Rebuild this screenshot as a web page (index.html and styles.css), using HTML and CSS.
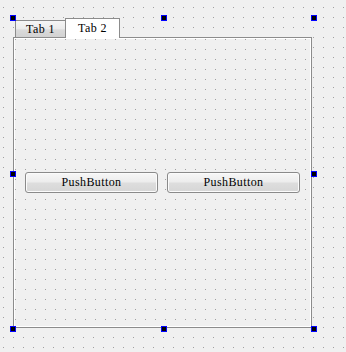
FILE: index.html
```html
<!DOCTYPE html>
<html lang="en">
<head>
    <meta charset="UTF-8">
    <title>Form</title>
    <link rel="stylesheet" href="styles.css">
</head>
<body>
    <div class="selection">
        <!-- tab widget -->
        <div class="tab-widget">
            <div class="tab-bar">
                <div class="tab">Tab 1</div>
                <div class="tab active">Tab 2</div>
            </div>
            <div class="pane">
                <button class="push">PushButton</button>
                <button class="push">PushButton</button>
            </div>
        </div>

        <!-- resize handles -->
        <span class="handle h-tl"></span>
        <span class="handle h-tm"></span>
        <span class="handle h-tr"></span>
        <span class="handle h-ml"></span>
        <span class="handle h-mr"></span>
        <span class="handle h-bl"></span>
        <span class="handle h-bm"></span>
        <span class="handle h-br"></span>
    </div>
</body>
</html>
```

FILE: styles.css
```css
body {
    margin: 0;
    width: 346px;
    height: 352px;
    overflow: hidden;
    font-family: 'Liberation Serif', serif;
    font-size: 12px;
    color: #000;
    background:
        linear-gradient(to bottom, transparent 1px, #f0f0f0 1px) 0 7px / 10px 10px,
        linear-gradient(to right, transparent 1px, #f0f0f0 1px) 3px 0 / 10px 10px,
        #a0a0a0;
}

.selection {
    position: relative;
    margin: 18px 0 0 13px;
    width: 301px;
    height: 311px;
}

.tab-widget {
    width: 299px;
}

.tab-bar {
    display: flex;
    align-items: flex-end;
    height: 19px;
    padding-left: 2px;
}

.tab {
    box-sizing: border-box;
    width: 50px;
    height: 17px;
    border-top: 1px solid #8c8c8c;
    border-left: 1px solid #8c8c8c;
    background: linear-gradient(#f6f6f6, #ebebeb 50%, #dadada 55%, #d2d2d2);
    text-align: center;
    line-height: 16px;
    letter-spacing: 0.4px;
}

.tab.active {
    position: relative;
    z-index: 1;
    width: 55px;
    height: 20px;
    margin-bottom: -1px;
    border-right: 1px solid #8c8c8c;
    background: #fff;
    line-height: 18px;
}

.pane {
    box-sizing: border-box;
    height: 291px;
    display: flex;
    align-items: center;
    gap: 9px;
    padding: 0 11px;
    border: 1px solid #8c8c8c;
    box-shadow: inset 0 0 0 1px #fff;
    background:
        linear-gradient(to bottom, transparent 1px, #f0f0f0 1px) 1px 1px / 10px 10px,
        linear-gradient(to right, transparent 1px, #f0f0f0 1px) 1px 1px / 10px 10px,
        #a0a0a0;
}

.push {
    flex: 1;
    height: 21px;
    margin-top: -1px;
    padding: 0;
    border: 1px solid #8a8a8a;
    border-radius: 3px;
    box-shadow: inset 0 0 0 1px #fbfbfb;
    background: linear-gradient(#f7f7f7, #ededed 45%, #dddddd 55%, #d6d6d6);
    font-family: 'Liberation Serif', serif;
    font-size: 12px;
    letter-spacing: 0.4px;
    color: #000;
}

.handle {
    position: absolute;
    box-sizing: border-box;
    width: 6px;
    height: 6px;
    border: 1px solid #0000ff;
    background: #000;
}

.h-tl { left: -3px; top: -3px; }
.h-tm { left: calc(50% - 3px); top: -3px; }
.h-tr { right: -3px; top: -3px; }
.h-ml { left: -3px; top: calc(50% - 3px); }
.h-mr { right: -3px; top: calc(50% - 3px); }
.h-bl { left: -3px; bottom: -3px; }
.h-bm { left: calc(50% - 3px); bottom: -3px; }
.h-br { right: -3px; bottom: -3px; }
```
